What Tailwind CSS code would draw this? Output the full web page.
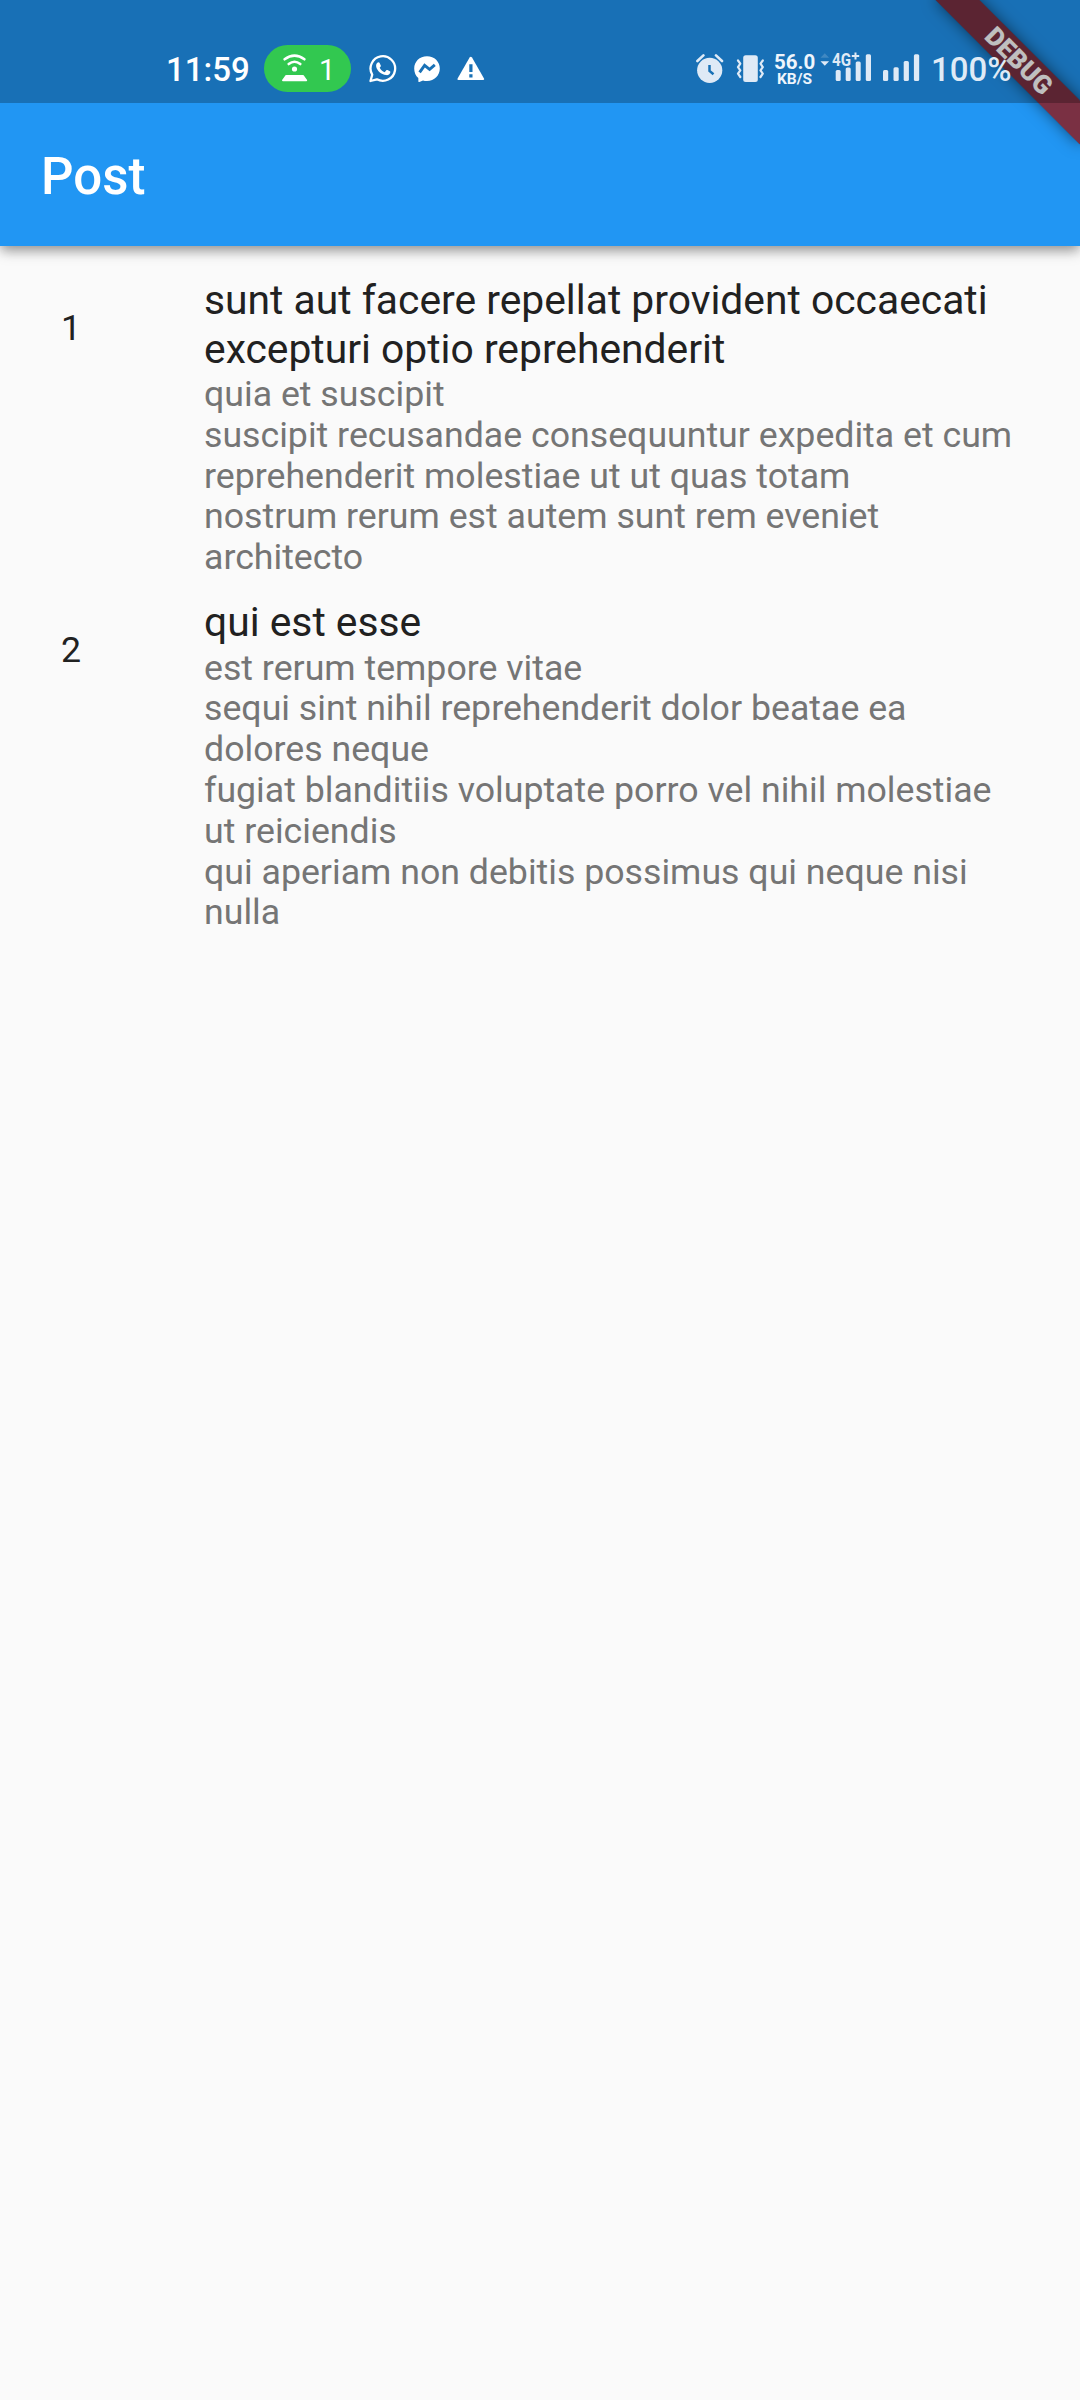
<!DOCTYPE html>
<html lang="en">
<head>
<meta charset="utf-8">
<title>Post</title>
<script src="https://cdn.jsdelivr.net/npm/@tailwindcss/browser@4"></script>
</head>
<body class="bg-[#fafafa] font-[Roboto,sans-serif]">
<div class="relative w-[1080px] h-[2400px] overflow-hidden bg-[#fafafa] text-[#212121]">

  <!-- App bar -->
  <header class="relative h-[246px] bg-[#2196f3] pt-[103px] shadow-[0_6px_12px_-1px_rgba(0,0,0,0.34),0_1px_12px_rgba(0,0,0,0.14)]">
    <h1 class="flex h-[147px] items-center pl-[41px] text-[51px] font-medium leading-none text-white"><span>Post</span></h1>
  </header>

  <!-- Debug ribbon -->
  <div class="absolute top-0 right-0 size-[190px] overflow-hidden">
    <div class="absolute left-[88px] top-[71.4px] h-[30.6px] w-[204px] origin-[102px_-71.4px] rotate-45 bg-black/45 shadow-[0_0_15px_rgba(0,0,0,0.5)]">
      <div class="flex h-full items-center justify-center bg-[#b71c1c]/63"><span class="text-[26px] font-black leading-none text-white">DEBUG</span></div>
    </div>
  </div>

  <!-- Status bar -->
  <div class="absolute inset-x-0 top-0 flex h-[103px] bg-black/25 text-[#dfeaf6]">
    <div class="ml-[166px] w-[98px] pt-[50px] text-[33px] font-medium leading-[39px] text-white"><span>11:59</span></div>
    <div class="mt-[45px] flex h-[47px] w-[87px] rounded-full bg-[#32c850] text-white">
      <svg class="ml-[17px] h-[47px] w-[28px]" viewBox="281 45 28 47" fill="none" stroke="currentColor" stroke-width="2.6" stroke-linecap="round">
        <path d="M284.600 59.300Q294.500 51.800 304.400 59.300M288.700 64Q294.500 59.500 300.300 64"/>
        <circle cx="294.500" cy="69" r="2.600" fill="currentColor" stroke="none"/>
        <path d="M286.500 75h16.200q1.200 0 1.700 1.200l2.700 3.800q.4 1.200-1 1.200h-23q-1.400 0-1-1.200l2.700-3.800q.5-1.200 1.700-1.200z" fill="currentColor" stroke="none"/>
      </svg>
      <div class="ml-[10px] pt-[8px] text-[29px] leading-[34px]"><span>1</span></div>
    </div>
    <svg class="ml-[17px] h-[103px] w-[30px] text-white" viewBox="368 0 30 103" fill="none" stroke="currentColor">
      <path d="M370.500 81l1.700-6.300a12.300 12.300 0 1 1 4.700 4.600z" stroke-width="2.300" stroke-linejoin="round"/>
      <path d="M377.300 62.800c.9-.9 2-.6 2.300.1l1.200 2.700c.2.600-.1 1-1.100 2.200 1.100 2.200 2.800 3.600 5 4.400l1.600-1.900c.4-.5.800-.5 1.200-.3l2.400 1.300c.6.400.5.700.3 1.500-.5 1.800-2.300 2.600-4.100 2.300-5-.7-9.100-4.500-9.900-8.400-.3-1.700.2-3.100 1.100-3.900z" fill="currentColor" stroke="none"/>
    </svg>
    <svg class="ml-[16px] h-[103px] w-[27px] text-white" viewBox="414 0 27 103">
      <path d="M427 56.200c7.500 0 12.800 5.400 12.800 12.300S434.500 81 427 81c-1.600 0-2.800-.2-4-.6l-3.600 1.600c-.5.200-1 0-1-.6l-.1-3.300c-2.600-2.300-4.100-5.600-4.100-9.600 0-6.900 5.300-12.300 12.800-12.300z" fill="currentColor"/>
      <path d="M419.600 72.300l5-7 5 4 5.200-4.400" fill="none" stroke="#1971b6" stroke-width="2.900"/>
    </svg>
    <svg class="ml-[16px] h-[103px] w-[28px] text-white" viewBox="457 0 28 103">
      <path d="M469.600 57.600q1.200-1.800 2.400 0l12 20.800q.7 1.600-1 1.600h-24.400q-1.700 0-1-1.600z" fill="currentColor"/>
      <path d="M469.300 64.300h3.200v7.700h-3.200zM469.300 74.200h3.200v3.200h-3.200z" fill="#1971b6"/>
    </svg>
    <svg class="ml-[211px] h-[103px] w-[28px]" viewBox="696 0 28 103" fill="none" stroke="currentColor">
      <circle cx="709.700" cy="70.300" r="12.600" fill="currentColor" stroke="none"/>
      <path d="M697.400 61l6-5.600M722 61l-6-5.600" stroke-width="2.600" stroke-linecap="round"/>
      <path d="M709.500 65v6l4 3.300" stroke="#1971b6" stroke-width="2.500"/>
    </svg>
    <svg class="ml-[12px] h-[103px] w-[29px]" viewBox="736 0 29 103" fill="none" stroke="currentColor" stroke-width="2.200" stroke-linejoin="round" stroke-linecap="round">
      <rect x="743.200" y="55.300" width="14.600" height="26.700" rx="2.500" fill="currentColor" stroke="none"/>
      <path d="M738 60.500l2.300 3.100-2.300 3.600 2.300 3.200-2.300 3.300 2.300 3.300M762.800 60.500l-2.300 3.100 2.300 3.600-2.300 3.200 2.300 3.300-2.300 3.300"/>
    </svg>
    <div class="ml-[9px] w-[41px] pt-[52px] text-center font-bold text-[#eef5fc]">
      <div class="text-[20.500px] leading-[20px]"><span>56.0</span></div>
      <div class="text-[15.500px] leading-[15px]"><span>KB/S</span></div>
    </div>
    <svg class="ml-[5px] h-[103px] w-[52px]" viewBox="820 0 52 103" fill="currentColor">
      <path d="M824.800 53.300l4.300 4.500h-8.600z" opacity=".2"/>
      <path d="M824.800 65.700l4.300-4.500h-8.600z"/>
      <text x="832" y="66.200" font-size="18.500" font-weight="700" textLength="19" lengthAdjust="spacingAndGlyphs">4G</text>
      <path d="M851.800 56h7.400M855.500 52.400v7.200" stroke="currentColor" stroke-width="2"/>
      <rect x="835.700" y="70" width="5" height="11" rx="1.500"/><rect x="845.700" y="67.500" width="5" height="13.500" rx="1.500"/><rect x="855.700" y="61.500" width="5" height="19.500" rx="1.500"/><rect x="865.800" y="54.200" width="5.200" height="26.800" rx="1.500"/>
    </svg>
    <svg class="ml-[10px] h-[103px] w-[38px]" viewBox="882 0 38 103" fill="currentColor">
      <rect x="883" y="70" width="5.200" height="11" rx="1.500"/><rect x="893.500" y="67.300" width="5.200" height="13.700" rx="1.500"/><rect x="903.700" y="61" width="5.200" height="20" rx="1.500"/><rect x="913.900" y="54.200" width="5.300" height="26.800" rx="1.500"/>
    </svg>
    <div class="ml-[11px] pt-[50px] text-[33px] font-medium leading-[39px]"><span>100%</span></div>
  </div>

  <!-- Posts -->
  <main class="pt-[30px]">
    <article class="flex h-[322px] pl-[61px]">
      <div class="w-[143px] pt-[32px] text-[35.700px] leading-[41px]"><span>1</span></div>
      <div class="whitespace-nowrap">
        <h2 class="text-[40.800px] leading-[49px]"><span>sunt aut facere repellat provident occaecati</span><br><span>excepturi optio reprehenderit</span></h2>
        <p class="text-[35.700px] leading-[40.800px] text-[#757575]"><span>quia et suscipit</span><br><span>suscipit recusandae consequuntur expedita et cum</span><br><span>reprehenderit molestiae ut ut quas totam</span><br><span>nostrum rerum est autem sunt rem eveniet</span><br><span>architecto</span></p>
      </div>
    </article>
    <article class="flex pl-[61px]">
      <div class="w-[143px] pt-[32px] text-[35.700px] leading-[41px]"><span>2</span></div>
      <div class="whitespace-nowrap">
        <h2 class="text-[40.800px] leading-[49px]"><span>qui est esse</span></h2>
        <p class="mt-[0.700px] text-[35.700px] leading-[40.800px] text-[#757575]"><span>est rerum tempore vitae</span><br><span>sequi sint nihil reprehenderit dolor beatae ea</span><br><span>dolores neque</span><br><span>fugiat blanditiis voluptate porro vel nihil molestiae</span><br><span>ut reiciendis</span><br><span>qui aperiam non debitis possimus qui neque nisi</span><br><span>nulla</span></p>
      </div>
    </article>
  </main>
</div>
</body>
</html>
